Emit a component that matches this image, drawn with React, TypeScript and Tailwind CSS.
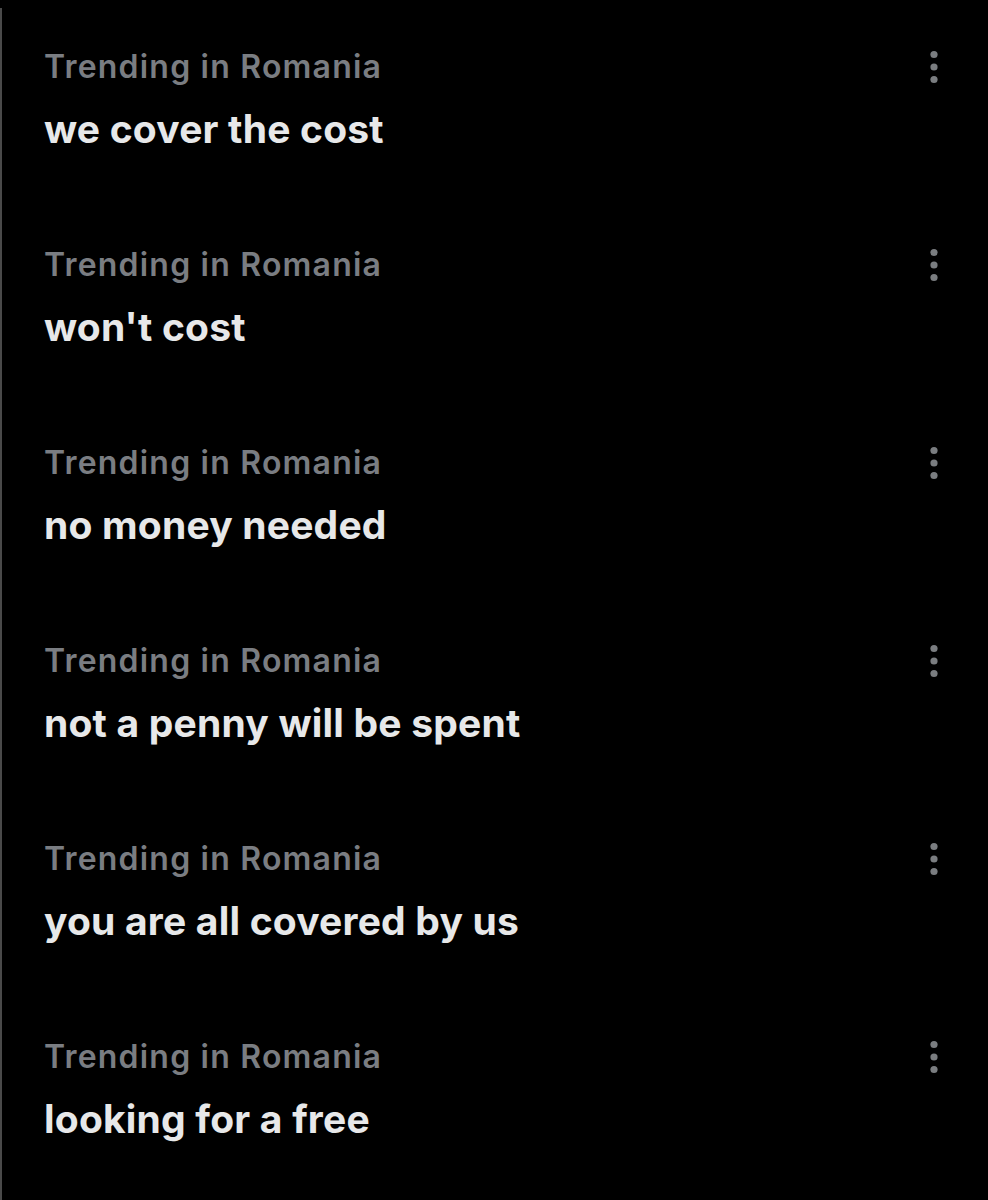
const trends: string[] = [
  "we cover the cost",
  "won't cost",
  "no money needed",
  "not a penny will be spent",
  "you are all covered by us",
  "looking for a free",
];

function MoreIcon() {
  return (
    <svg width="14" height="40" viewBox="0 0 14 40" className="text-[#7a7d80]">
      <circle cx="7" cy="7.5" r="3.6" fill="currentColor" />
      <circle cx="7" cy="20" r="3.6" fill="currentColor" />
      <circle cx="7" cy="32.5" r="3.6" fill="currentColor" />
    </svg>
  );
}

export default function App() {
  return (
    <div className="w-[988px] h-[1200px] bg-black pt-[8px] overflow-hidden">
      <div className="h-full border-l-2 border-[#4a4a4a] font-['Inter','Liberation_Sans',sans-serif]">
        {trends.map((title, i) => (
          <div
            key={i}
            className="h-[198px] flex items-start pl-[42px] pr-[47px] pt-[39px]"
          >
            <div className="flex-1">
              <div className="text-[32px] leading-[40px] font-semibold tracking-[1.2px] text-[#7a7d82]">
                Trending in Romania
              </div>
              <div className="mt-[20px] text-[39px] leading-[44px] font-bold tracking-[0.2px] text-[#e7e8e9]">
                {title}
              </div>
            </div>
            <MoreIcon />
          </div>
        ))}
      </div>
    </div>
  );
}
